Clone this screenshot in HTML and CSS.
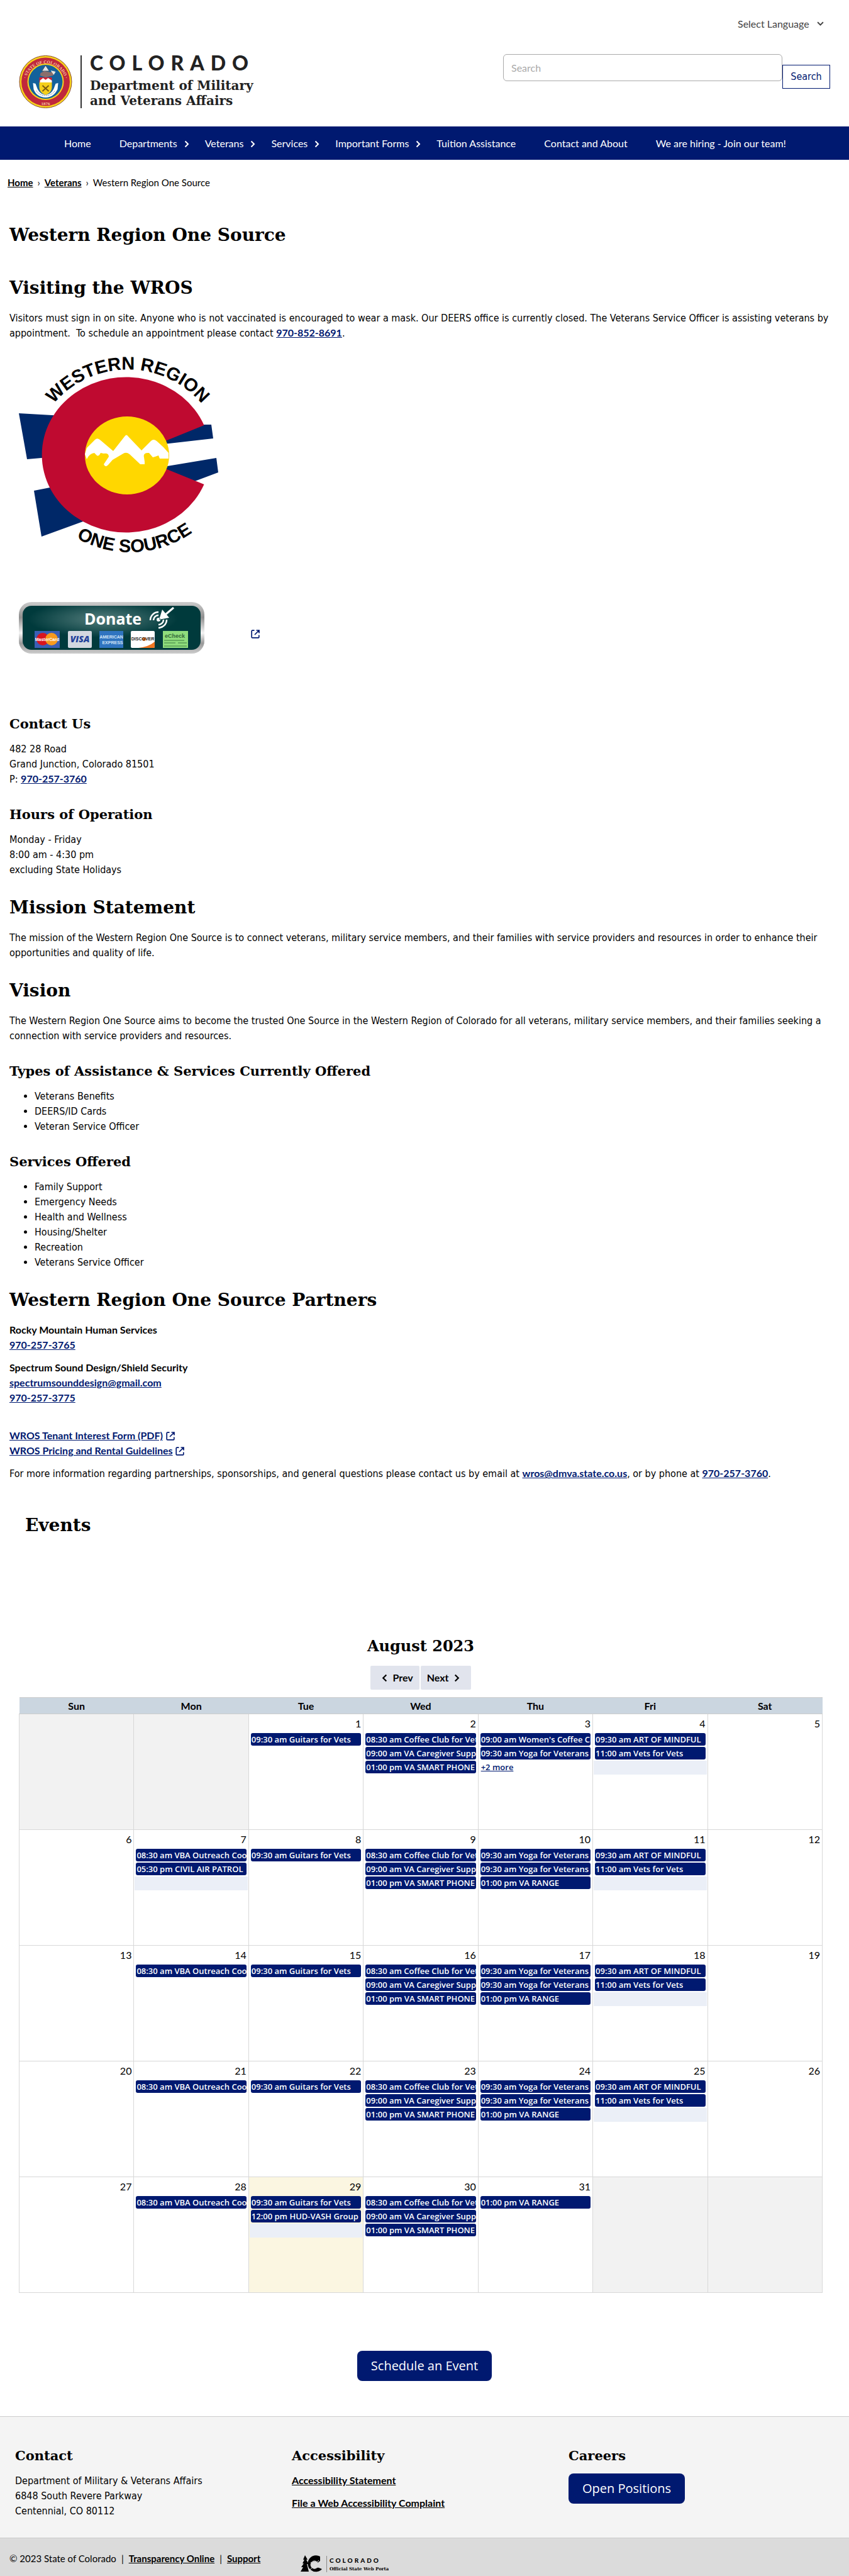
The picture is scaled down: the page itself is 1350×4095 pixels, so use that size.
FILE: index.html
```html
<!DOCTYPE html>
<html lang="en">
<head>
<meta charset="utf-8">
<meta name="viewport" content="width=device-width, initial-scale=1">
<title>Western Region One Source | Department of Military and Veterans Affairs</title>
<link rel="stylesheet" href="styles.css">
</head>
<body>
<svg class="sprite" aria-hidden="true">
  <symbol id="chev-right" viewBox="0 0 8 12"><path d="M1.5 1.5 6 6l-4.500 4.500" fill="none" stroke="currentColor" stroke-width="2"/></symbol>
  <symbol id="external" viewBox="0 0 14 14"><path d="M5.500 1.200H2.200a1 1 0 0 0-1 1v9.600a1 1 0 0 0 1 1h9.600a1 1 0 0 0 1-1V8.500M8.500 1h4.500v4.500M12.600 1.400 6 8" fill="none" stroke="currentColor" stroke-width="1.700"/></symbol>
</svg>

<header class="site-header">
  <a class="brand" href="#" aria-label="Colorado Department of Military and Veterans Affairs">
    <svg class="seal" viewBox="0 0 84 84" aria-hidden="true">
      <circle cx="42" cy="42" r="41.500" fill="#f7d31c" stroke="#8a4a28" stroke-width="1"/>
      <circle cx="42" cy="42" r="38.500" fill="#c0283c"/>
      <circle cx="42" cy="42" r="29" fill="#f7d31c"/>
      <circle cx="42" cy="42" r="27" fill="#14619b"/>
      <path id="ring-top" d="M12 56A32 32 0 1 1 72 56" fill="none"/>
      <text class="seal-text"><textPath href="#ring-top" startOffset="50%">· STATE OF COLORADO ·</textPath></text>
      <text class="seal-text" x="42" y="79">1876</text>
      <path d="M42 16l6 9H36z" fill="#dfe5e8" stroke="#49545c"/>
      <path d="M34 28l6-3 10 2 6-3-2 8-12 3-9-3z" fill="#8a6f6c"/>
      <path d="m50 24 8 2-3 5z" fill="#e9e6dd"/>
      <path d="M32 35h20v8H32z" fill="#d3202f"/>
      <path d="m33 40 5-4 4 3 4-3 6 4v3H33z" fill="#fff"/>
      <path d="M32 43h20v7c0 8-5 11-10 13-5-2-10-5-10-13z" fill="#f5cf1c"/>
      <path d="m37 48 10 9m0-9-10 9" stroke="#7a5a12" stroke-width="2"/>
      <path d="M22 44l4 1 3 8c3 6 7 9 13 10 6-1 10-4 13-10l3-8 4-1-1 10c-4 8-10 13-19 13S26 62 23 54z" fill="#fff"/>
      <path d="M27 56c4 6 9 8 15 8s11-2 15-8" fill="none" stroke="#8092a4" stroke-dasharray="2 1"/>
    </svg>
    <span class="brand-text">
      <span class="brand-state">COLORADO</span>
      <span class="brand-dept">Department of Military<br>and Veterans Affairs</span>
    </span>
  </a>
  <div class="tools">
    <div class="language">
      <select aria-label="Select Language"><option>Select Language</option><option>Español</option></select>
      <svg viewBox="0 0 10 7" aria-hidden="true"><path d="m1 1 4 4 4-4" fill="none" stroke="#444" stroke-width="1.700"/></svg>
    </div>
    <form class="search">
      <input type="search" placeholder="Search" aria-label="Search">
      <button type="submit">Search</button>
    </form>
  </div>
</header>

<nav class="main-nav" aria-label="Main">
  <ul>
    <li><a href="#">Home</a></li>
    <li class="has-sub"><a href="#">Departments</a><svg><use href="#chev-right"/></svg></li>
    <li class="has-sub"><a href="#">Veterans</a><svg><use href="#chev-right"/></svg></li>
    <li class="has-sub"><a href="#">Services</a><svg><use href="#chev-right"/></svg></li>
    <li class="has-sub"><a href="#">Important Forms</a><svg><use href="#chev-right"/></svg></li>
    <li><a href="#">Tuition Assistance</a></li>
    <li><a href="#">Contact and About</a></li>
    <li><a href="#">We are hiring - Join our team!</a></li>
  </ul>
</nav>

<nav class="crumbs" aria-label="Breadcrumb">
  <a href="#">Home</a><span>›</span><a href="#">Veterans</a><span>›</span>Western Region One Source
</nav>

<main>
  <h1>Western Region One Source</h1>

  <h2>Visiting the WROS</h2>
  <p>Visitors must sign in on site. Anyone who is not vaccinated is encouraged to wear a mask. Our DEERS office is currently closed. The Veterans Service Officer is assisting veterans by appointment.&nbsp; To schedule an appointment please contact <a href="tel:9708528691">970-852-8691</a>.</p>

  <svg class="wros-logo" viewBox="0 0 340 320" role="img" aria-label="Western Region One Source">
    <path d="M10 95 80 99V163L23 168ZM34 218 75 210 123 263 46 291Z" fill="#002868"/>
    <path d="M295 113H316L319 135 240 144V137ZM324 166 327 189 287 204 240 185V180Z" fill="#002868"/>
    <path d="M304.500 114A134 123.500 0 1 0 304.500 208L243 183V139Z" fill="#bf0a30"/>
    <ellipse cx="182" cy="162" rx="67" ry="62" fill="#ffd700"/>
    <path d="M115 160 118 150 131 137Q135 133 140 138L160 155 178 132Q181 127 184 132L205 154 220 139Q224 135 229 139L240 149 248 158V167H234L232 162Q227 164 223 165L217 158Q207 157 209 165L210 172V176H203L186 160Q181 156 176 159L159 169 152 177Q147 182 145 176L153 164Q153 158 145 159L140 158Q137 164 134 162L130 158Q122 159 118 168Z" fill="#fff"/>
    <path id="arc-top" d="M43 114A155 155 0 0 1 323 114" fill="none"/>
    <path id="arc-bottom" d="M90 286A172 172 0 0 0 297 276" fill="none"/>
    <text class="logo-text"><textPath href="#arc-top" startOffset="50%">WESTERN REGION</textPath></text>
    <text class="logo-text"><textPath href="#arc-bottom" startOffset="50%">ONE SOURCE</textPath></text>
  </svg>

  <div class="donate">
    <a href="#" aria-label="Donate">
      <svg class="donate-button" viewBox="0 0 295 82" aria-hidden="true">
        <defs>
          <radialGradient id="teal" cx=".45" cy=".3" r=".42"><stop offset="0" stop-color="#547d7c"/><stop offset="1" stop-color="#003a3c"/></radialGradient>
          <linearGradient id="silver" x2="0" y2="1"><stop offset="0" stop-color="#ccc"/><stop offset=".3" stop-color="#8f8f8f"/><stop offset=".6" stop-color="#f4f4f4"/><stop offset=".8" stop-color="#999"/><stop offset="1" stop-color="#ccc"/></linearGradient>
        </defs>
        <rect width="295" height="82" rx="20" fill="url(#silver)"/>
        <rect x="6" y="6" width="283" height="70" rx="14" fill="url(#teal)"/>
        <text x="104" y="36" class="donate-text">Donate</text>
        <g fill="none" stroke="#fff" stroke-width="2.500"><path d="M209 29a13 13 0 0 1 13-13M214 29a8 8 0 0 1 8-8M235 28a13 13 0 0 1-13 13M230 28a8 8 0 0 1-8 8"/><path d="M233 20 246 9" stroke-width="3"/></g>
        <path d="m223 28 5-16 11 13zM219 28a3 3 0 1 0 6 0 3 3 0 0 0-6 0" fill="#fff"/>
        <rect x="25" y="46" width="40" height="27" fill="#3b5fb5"/><circle cx="38" cy="59" r="10" fill="#d9141e"/><circle cx="52" cy="59" r="10" fill="#f79a1d"/><text x="45" y="62" class="card-text" fill="#fff">MasterCard</text>
        <rect x="78" y="46" width="38" height="27" rx="2" fill="#d3d8e0"/><text x="97" y="64" class="card-visa" fill="#22419a">VISA</text>
        <rect x="128" y="46" width="38" height="27" fill="#2f74c0"/><text x="147" y="58" class="card-text" fill="#d3e6f7">AMERICAN</text><text x="149" y="67" class="card-text" fill="#d3e6f7">EXPRESS</text>
        <rect x="178" y="46" width="38" height="27" rx="2" fill="#fff"/><path d="M216 63v8q0 2-2 2h-24q17-2 26-10z" fill="#ef7622"/><circle cx="199" cy="59" r="3" fill="#ef7622"/><text x="197" y="61" class="card-text" fill="#222">DISCOVER</text>
        <rect x="229" y="46" width="40" height="27" fill="#8fdc7c"/><text x="248" y="57" class="card-echeck" fill="#33693a">eCheck</text><path d="M231 61h32m-32 4h18m4 0h14m-36 5h36" stroke="#3d7a41"/>
      </svg>
      <svg class="ext"><use href="#external"/></svg>
    </a>
  </div>

  <h3>Contact Us</h3>
  <p>482 28 Road<br>Grand Junction, Colorado 81501<br>P: <a href="tel:9702573760">970-257-3760</a></p>

  <h3>Hours of Operation</h3>
  <p>Monday - Friday<br>8:00 am - 4:30 pm<br>excluding State Holidays</p>

  <h2>Mission Statement</h2>
  <p>The mission of the Western Region One Source is to connect veterans, military service members, and their families with service providers and resources in order to enhance their opportunities and quality of life.</p>

  <h2>Vision</h2>
  <p>The Western Region One Source aims to become the trusted One Source in the Western Region of Colorado for all veterans, military service members, and their families seeking a connection with service providers and resources.</p>

  <h3>Types of Assistance &amp; Services Currently Offered</h3>
  <ul>
    <li>Veterans Benefits</li>
    <li>DEERS/ID Cards</li>
    <li>Veteran Service Officer</li>
  </ul>

  <h3>Services Offered</h3>
  <ul>
    <li>Family Support</li>
    <li>Emergency Needs</li>
    <li>Health and Wellness</li>
    <li>Housing/Shelter</li>
    <li>Recreation</li>
    <li>Veterans Service Officer</li>
  </ul>

  <h2>Western Region One Source Partners</h2>
  <p><strong>Rocky Mountain Human Services</strong><br><a href="tel:9702573765">970-257-3765</a></p>
  <p><strong>Spectrum Sound Design/Shield Security</strong><br><a href="#">spectrumsounddesign@gmail.com</a><br><a href="tel:9702573775">970-257-3775</a></p>
  <p class="documents"><a href="#">WROS Tenant Interest Form (PDF)</a> <svg class="ext"><use href="#external"/></svg><br><a href="#">WROS Pricing and Rental Guidelines</a> <svg class="ext"><use href="#external"/></svg></p>
  <p>For more information regarding partnerships, sponsorships, and general questions please contact us by email at <a href="#">wros@dmva.state.co.us</a>, or by phone at <a href="tel:9702573760">970-257-3760</a>.</p>
</main>

<section class="events">
  <h2>Events</h2>
  <div class="month">
  <h3>August 2023</h3>
  <div class="pager">
    <button type="button"><svg class="flip"><use href="#chev-right"/></svg>Prev</button>
    <button type="button">Next<svg><use href="#chev-right"/></svg></button>
  </div>
  <table class="calendar">
    <thead><tr><th>Sun</th><th>Mon</th><th>Tue</th><th>Wed</th><th>Thu</th><th>Fri</th><th>Sat</th></tr></thead>
    <tbody>
      <tr>
        <td class="out"></td>
        <td class="out"></td>
        <td><time>1</time><a href="#">09:30 am Guitars for Vets</a></td>
        <td><time>2</time><a href="#">08:30 am Coffee Club for Vets</a><a href="#">09:00 am VA Caregiver Support</a><a href="#">01:00 pm VA SMART PHONE</a></td>
        <td><time>3</time><a href="#">09:00 am Women's Coffee Club</a><a href="#">09:30 am Yoga for Veterans</a><a class="more" href="#">+2 more</a></td>
        <td><time>4</time><a href="#">09:30 am ART OF MINDFUL</a><a href="#">11:00 am Vets for Vets</a><span class="blank"></span></td>
        <td><time>5</time></td>
      </tr>
      <tr>
        <td><time>6</time></td>
        <td><time>7</time><a href="#">08:30 am VBA Outreach Coord</a><a href="#">05:30 pm CIVIL AIR PATROL</a><span class="blank"></span></td>
        <td><time>8</time><a href="#">09:30 am Guitars for Vets</a></td>
        <td><time>9</time><a href="#">08:30 am Coffee Club for Vets</a><a href="#">09:00 am VA Caregiver Support</a><a href="#">01:00 pm VA SMART PHONE</a></td>
        <td><time>10</time><a href="#">09:30 am Yoga for Veterans</a><a href="#">09:30 am Yoga for Veterans</a><a href="#">01:00 pm VA RANGE</a></td>
        <td><time>11</time><a href="#">09:30 am ART OF MINDFUL</a><a href="#">11:00 am Vets for Vets</a><span class="blank"></span></td>
        <td><time>12</time></td>
      </tr>
      <tr>
        <td><time>13</time></td>
        <td><time>14</time><a href="#">08:30 am VBA Outreach Coord</a></td>
        <td><time>15</time><a href="#">09:30 am Guitars for Vets</a></td>
        <td><time>16</time><a href="#">08:30 am Coffee Club for Vets</a><a href="#">09:00 am VA Caregiver Support</a><a href="#">01:00 pm VA SMART PHONE</a></td>
        <td><time>17</time><a href="#">09:30 am Yoga for Veterans</a><a href="#">09:30 am Yoga for Veterans</a><a href="#">01:00 pm VA RANGE</a></td>
        <td><time>18</time><a href="#">09:30 am ART OF MINDFUL</a><a href="#">11:00 am Vets for Vets</a><span class="blank"></span></td>
        <td><time>19</time></td>
      </tr>
      <tr>
        <td><time>20</time></td>
        <td><time>21</time><a href="#">08:30 am VBA Outreach Coord</a></td>
        <td><time>22</time><a href="#">09:30 am Guitars for Vets</a></td>
        <td><time>23</time><a href="#">08:30 am Coffee Club for Vets</a><a href="#">09:00 am VA Caregiver Support</a><a href="#">01:00 pm VA SMART PHONE</a></td>
        <td><time>24</time><a href="#">09:30 am Yoga for Veterans</a><a href="#">09:30 am Yoga for Veterans</a><a href="#">01:00 pm VA RANGE</a></td>
        <td><time>25</time><a href="#">09:30 am ART OF MINDFUL</a><a href="#">11:00 am Vets for Vets</a><span class="blank"></span></td>
        <td><time>26</time></td>
      </tr>
      <tr>
        <td><time>27</time></td>
        <td><time>28</time><a href="#">08:30 am VBA Outreach Coord</a></td>
        <td class="today"><time>29</time><a href="#">09:30 am Guitars for Vets</a><a href="#">12:00 pm HUD-VASH Group</a><span class="blank"></span></td>
        <td><time>30</time><a href="#">08:30 am Coffee Club for Vets</a><a href="#">09:00 am VA Caregiver Support</a><a href="#">01:00 pm VA SMART PHONE</a></td>
        <td><time>31</time><a href="#">01:00 pm VA RANGE</a></td>
        <td class="out"></td>
        <td class="out"></td>
      </tr>
    </tbody>
  </table>
  </div>
  <a class="button" href="#">Schedule an Event</a>
</section>

<footer>
  <div class="footer-columns">
    <div>
      <h3>Contact</h3>
      <p>Department of Military &amp; Veterans Affairs<br>6848 South Revere Parkway<br>Centennial, CO 80112</p>
    </div>
    <div>
      <h3>Accessibility</h3>
      <p><a href="#">Accessibility Statement</a></p>
      <p><a href="#">File a Web Accessibility Complaint</a></p>
    </div>
    <div>
      <h3>Careers</h3>
      <a class="button" href="#">Open Positions</a>
    </div>
  </div>
  <div class="footer-bar">
    <div class="legal">© 2023 State of Colorado<span>|</span><a href="#">Transparency Online</a><span>|</span><a href="#">Support</a></div>
    <svg class="portal" viewBox="0 0 140 30" role="img" aria-label="Colorado Official State Web Portal">
      <path d="m7 1 4 7-2 0 4 7-3 0 3 12H0l4-7H1l4-6H3l3-6H4z"/>
      <path d="M31 3v7l-4 3a6 6 0 1 0 0 7l7 3a13 13 0 1 1-3-20z"/>
      <circle cx="22" cy="16" r="6" fill="none" stroke="#ddd"/><path d="m15 24 14-15M16 12l12 9" stroke="#ddd"/>
      <path d="M41.500 2v26" stroke="#888"/>
      <text x="46" y="13" class="portal-name">COLORADO</text>
      <text x="46" y="25" class="portal-sub">Official State Web Portal</text>
    </svg>
  </div>
</footer>
</body>
</html>
```
FILE: styles.css
```css
:root {
  --navy: #001970;
  --slab: "DejaVu Serif", "Liberation Serif", serif;
  --text: "DejaVu Sans Condensed", "DejaVu Sans", sans-serif;
  --ui: Lato, "Open Sans", sans-serif;
}
* { box-sizing: border-box; }
body {
  margin: 0;
  color: #000;
  background: #fff;
  font: 16px/24px var(--text);
}
.sprite { display: block; width: 0; height: 0; }
ul { margin: 0; padding: 0; }
p { margin: 0 0 12px; }
button, input, select { font: inherit; }
a, strong { font-family: var(--ui); font-weight: 700; }
p a, p strong { line-height: 20px; }

/* Header */
.site-header {
  display: flex;
  justify-content: space-between;
  height: 201px;
  padding: 0 30px;
}
.brand {
  display: flex;
  align-self: flex-start;
  margin-top: 88px;
  color: #222;
  text-decoration: none;
}
.seal { width: 85px; height: 84px; }
.seal-text { font: 700 7px "Liberation Serif", serif; fill: #f6c9a0; text-anchor: middle; }
.brand-text {
  display: flex;
  flex-direction: column;
  justify-content: space-between;
  height: 84px;
  margin-left: 13px;
  padding-left: 13px;
  border-left: 2px solid #333;
}
.brand-state { font: 900 32px/24px Lato, sans-serif; letter-spacing: 10px; }
.brand-dept { font: 700 20px/24px var(--slab); }
.tools { padding-top: 26px; }
.language {
  display: flex;
  justify-content: flex-end;
  align-items: center;
  gap: 12px;
  margin-right: 10px;
}
.language select {
  height: 24px;
  padding: 0;
  border: 0;
  color: #444;
  background: none;
  font-family: var(--ui);
  appearance: none;
}
.language svg { width: 11px; height: 8px; }
.search { display: flex; align-items: flex-end; height: 55px; margin-top: 36px; }
.search input {
  align-self: flex-start;
  width: 444px;
  height: 43px;
  padding: 0 12px;
  border: 1px solid #aaa;
  border-radius: 6px;
  font-family: var(--ui);
  appearance: none;
}
.search input::placeholder { color: #aaa; }
.search button {
  width: 76px;
  height: 38px;
  padding: 0;
  border: 1px solid var(--navy);
  color: var(--navy);
  background: #fff;
}

/* Navigation */
.main-nav { background: var(--navy); }
.main-nav ul {
  display: flex;
  padding: 15px 0 14px 102px;
  list-style: none;
}
.main-nav li { display: flex; align-items: center; padding-right: 45px; }
.main-nav .has-sub { padding-right: 0; }
.main-nav a { color: #fff; font-weight: 400; text-decoration: none; }
.main-nav svg { width: 8px; height: 12px; margin: 2px 25px 0 11px; color: #fff; }
.crumbs { padding: 24px 12px 0; font-family: var(--ui); font-size: 15px; }
.crumbs a { color: #000; }
.crumbs span { margin: 0 7px; }

/* Page content */
main { padding: 52px 15px 0; }
main a { color: var(--navy); }
h1, h2, h3 { font-family: var(--slab); font-weight: 700; }
h1 { margin: 0 0 44px; font-size: 28px; line-height: 40px; }
h2 { margin: 28px 0 16px; font-size: 28px; line-height: 40px; }
h3 { margin: 28px 0 12px; font-size: 21px; line-height: 32px; }
main ul { padding-left: 40px; }
.wros-logo { display: block; width: 340px; height: 320px; margin: 20px 0 0 5px; }
.logo-text { font: 700 29px "Liberation Sans", sans-serif; text-anchor: middle; }
.donate { padding: 75px 0 68px 15px; }
.donate a { display: flex; align-items: center; gap: 74px; }
.donate .ext { margin-top: 20px; }
.donate-button { width: 295px; height: 82px; }
.donate-text { font: 700 25px "Open Sans", sans-serif; fill: #fff; }
.card-text { font: 700 7px "Liberation Sans", sans-serif; text-anchor: middle; }
.card-visa { font: italic 900 14px "Open Sans", sans-serif; text-anchor: middle; }
.card-echeck { font: 700 9px "Liberation Sans", sans-serif; text-anchor: middle; }
.ext { width: 14px; height: 14px; color: var(--navy); vertical-align: -2px; }
.documents { margin-top: 36px; }

/* Calendar */
.events { padding: 38px 30px 0; }
.events h2 { margin: 0 10px 156px; }
.events h3 { margin: 0 0 15px; font-size: 24px; text-align: center; }
.month { margin-right: 12px; }
.pager { display: flex; justify-content: center; gap: 2px; }
.pager button {
  display: flex;
  align-items: center;
  gap: 8px;
  height: 38px;
  padding: 0 18px;
  border: 0;
  border-radius: 2px;
  background: #e1e4ed;
  font-family: var(--ui);
  font-weight: 700;
}
.pager button:first-child { padding-right: 10px; }
.pager button:last-child { padding-left: 10px; }
.pager svg { width: 9px; height: 15px; }
.pager .flip { transform: rotate(180deg); }
.calendar {
  width: 100%;
  margin-top: 12px;
  table-layout: fixed;
  border-collapse: collapse;
}
.calendar th {
  height: 26px;
  padding: 0;
  border: 1px solid #ccc;
  border-width: 1px 0;
  background: #cbd6e0;
  font-family: var(--ui);
}
.calendar td {
  height: 184px;
  padding: 0 3px;
  border: 1px solid #d8d8d8;
  vertical-align: top;
}
.calendar .out { background: #f2f2f2; }
.calendar .today { background: #fbf6e1; }
.calendar time {
  display: block;
  height: 30px;
  font-family: var(--ui);
  line-height: 30px;
  text-align: right;
}
.calendar a {
  display: block;
  height: 20px;
  margin-bottom: 2px;
  padding: 0 1px;
  overflow: hidden;
  border-radius: 3px;
  color: #fff;
  background: var(--navy);
  font: 600 13px/20px "Open Sans", sans-serif;
  text-decoration: none;
  white-space: nowrap;
}
.calendar .more { color: var(--navy); background: none; text-decoration: underline; }
.blank { display: block; height: 22px; margin: 0 -2px; background: #ebeff7; }
.button {
  display: block;
  width: fit-content;
  padding: 0 22px;
  border-radius: 8px;
  color: #fff;
  background: var(--navy);
  font: 400 20px/48px "Open Sans", sans-serif;
  text-decoration: none;
}
.events .button { margin: 92px auto 56px; }

/* Footer */
footer { border-top: 1px solid #ccc; background: #f4f4f4; }
.footer-columns {
  display: grid;
  grid-template-columns: repeat(3, 1fr);
  padding: 46px 6px 18px 24px;
}
.footer-columns h3 { margin-top: 0; }
footer p a, .legal a { color: #000; }
.footer-bar {
  display: flex;
  gap: 64px;
  height: 61px;
  padding: 20px 15px 0;
  border-top: 1px solid #ccc;
  background: #dbdbdb;
}
.legal { font-family: var(--ui); font-size: 15px; }
.legal span { margin: 0 8px; }
.portal { width: 140px; height: 30px; margin-top: 6px; }
.portal-name { font: 900 10px Lato, sans-serif; letter-spacing: 3px; }
.portal-sub { font: 700 7px "DejaVu Serif", serif; }
```
